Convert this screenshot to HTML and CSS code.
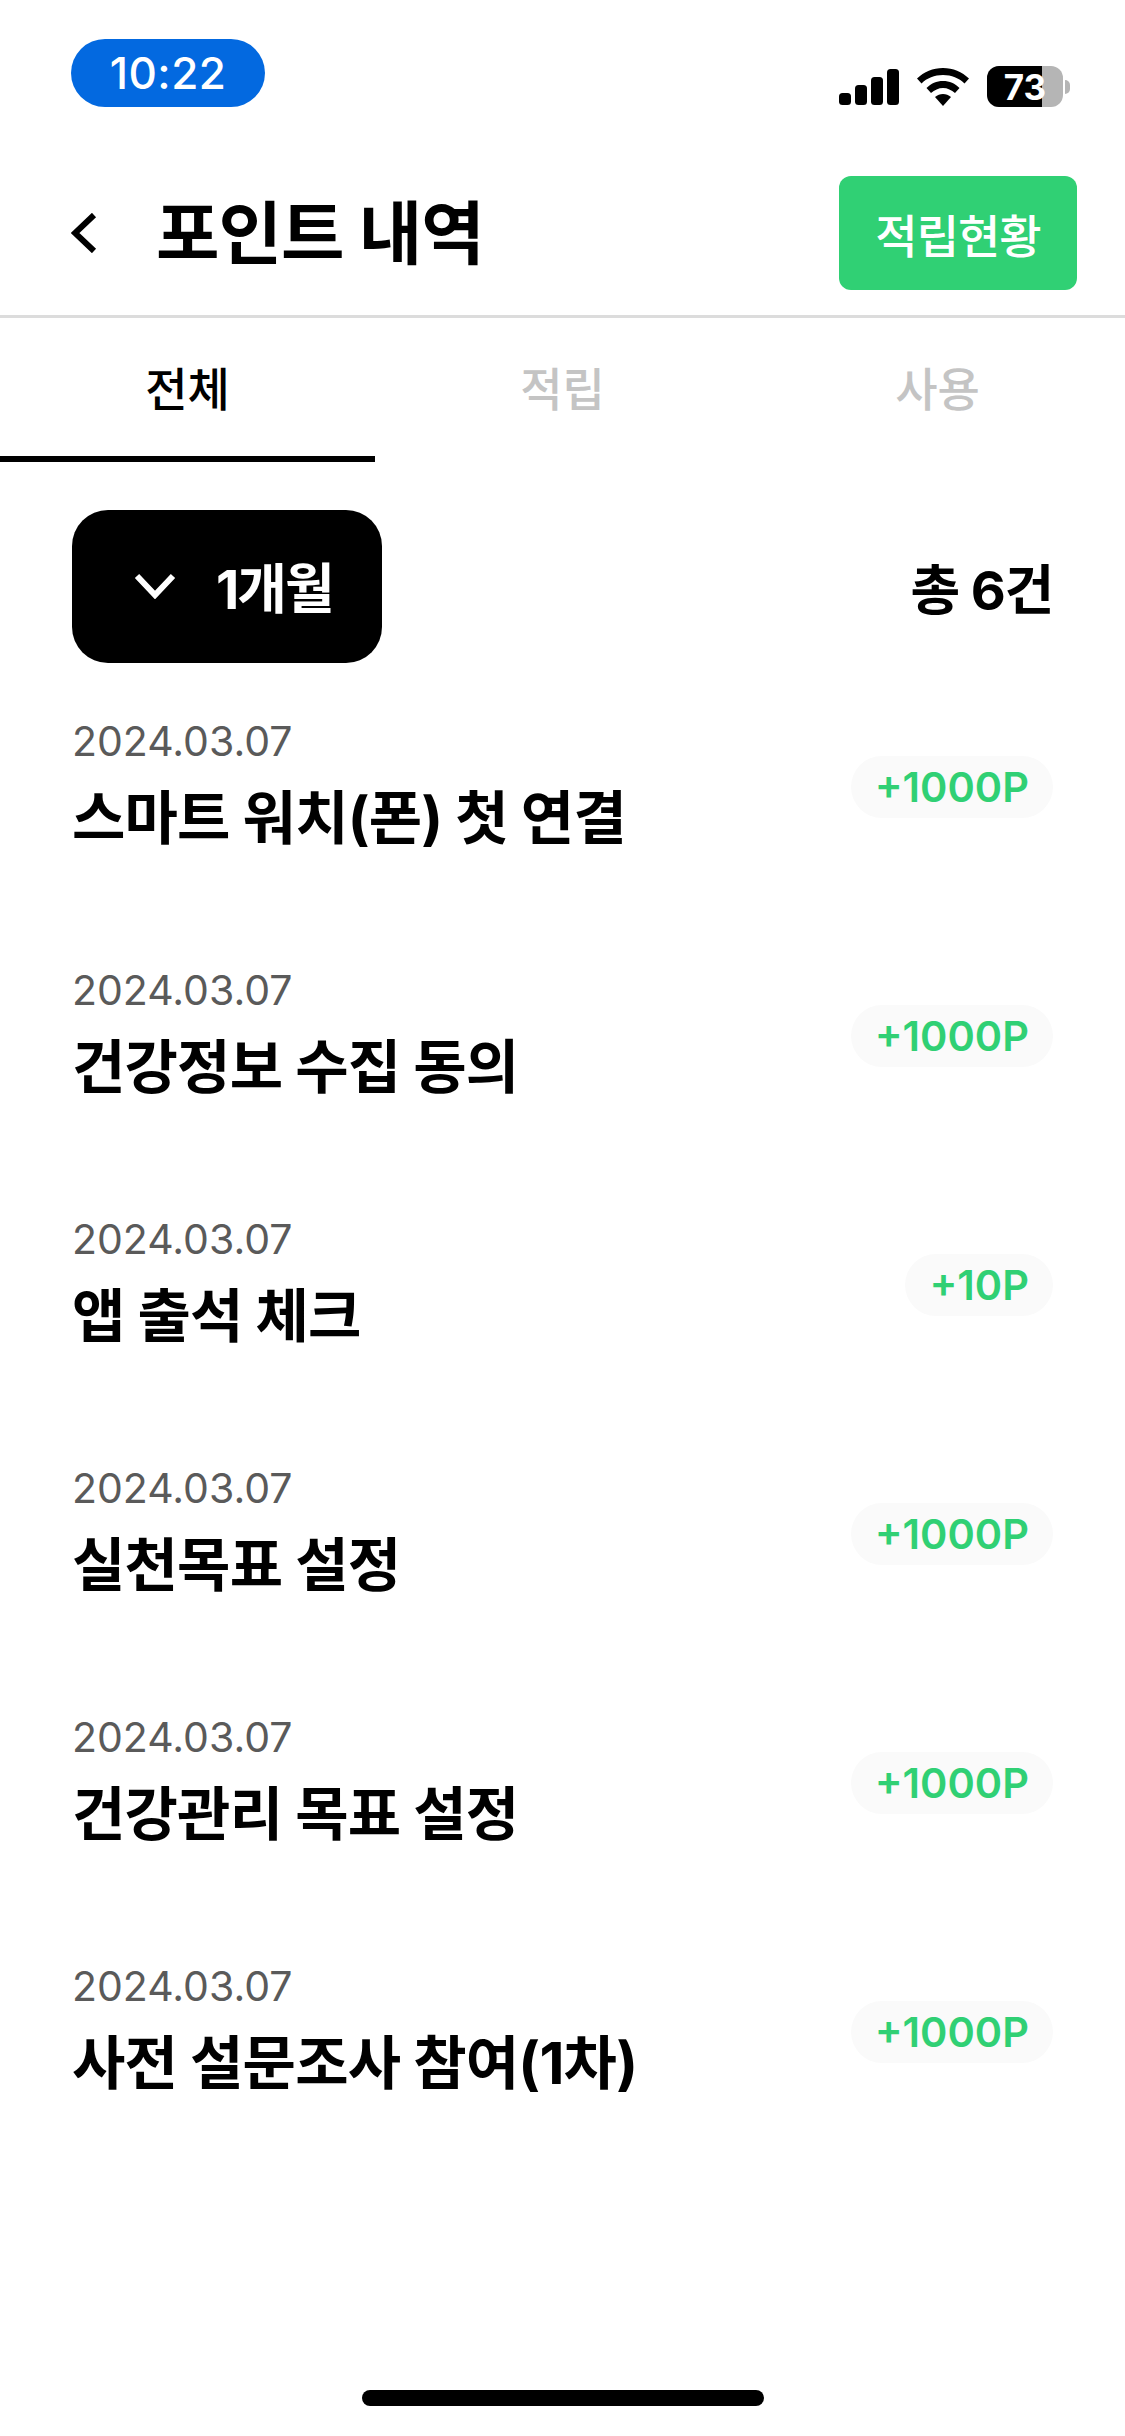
FILE: index.html
```html
<!DOCTYPE html>
<html lang="ko">
<head>
<meta charset="utf-8">
<title>포인트 내역</title>
<link rel="stylesheet" href="styles.css">
</head>
<body>
<div class="app">
  <div class="status">
    <div class="time">10:22</div>
    <div class="status-icons">
      <svg class="signal" width="60" height="36" viewBox="0 0 60 36"><rect x="0" y="24" width="12" height="12" rx="3.5"/><rect x="16" y="16" width="12" height="20" rx="3.5"/><rect x="32" y="8" width="12" height="28" rx="3.5"/><rect x="48" y="0" width="12" height="36" rx="3.5"/></svg>
      <svg class="wifi" width="52" height="38" viewBox="0 0 52 38"><path d="M26 0C16 0 7 4 0 10.500L4.500 15.500C10 10 17.500 7 26 7S42 10 47.500 15.500L52 10.500C45 4 36 0 26 0Z"/><path d="M26 13C19.500 13 14 15.500 9.500 20L14 25C17.500 22 21.500 20 26 20S34.500 22 38 25L42.500 20C38 15.500 32.500 13 26 13Z"/><path d="M26 26C23 26 20.500 27 18 29L26 38L34 29C31.500 27 29 26 26 26Z"/></svg>
      <div class="battery"><div class="battery-body"><span class="battery-fill"></span><span class="battery-text">73</span></div><span class="battery-tip"></span></div>
    </div>
  </div>

  <header class="topbar">
    <div class="topbar-left">
      <svg class="back" width="26" height="40" viewBox="0 0 26 40"><path d="M23 2L4 20L23 38" fill="none" stroke="#000" stroke-width="6"/></svg>
      <h1 class="title">포인트 내역</h1>
    </div>
    <button class="earn-btn">적립현황</button>
  </header>

  <nav class="tabs">
    <div class="tab tab-active">전체</div>
    <div class="tab">적립</div>
    <div class="tab">사용</div>
  </nav>

  <div class="filter">
    <div class="month">
      <svg width="42" height="26" viewBox="0 0 42 26"><path d="M3 3L21 22L39 3" fill="none" stroke="#fff" stroke-width="6"/></svg>
      <span>1개월</span>
    </div>
    <div class="count">총 6건</div>
  </div>

  <ul class="list">
    <li class="row"><div class="info"><div class="date">2024.03.07</div><div class="name">스마트 워치(폰) 첫 연결</div></div><div class="badge">+1000P</div></li>
    <li class="row"><div class="info"><div class="date">2024.03.07</div><div class="name">건강정보 수집 동의</div></div><div class="badge">+1000P</div></li>
    <li class="row"><div class="info"><div class="date">2024.03.07</div><div class="name">앱 출석 체크</div></div><div class="badge">+10P</div></li>
    <li class="row"><div class="info"><div class="date">2024.03.07</div><div class="name">실천목표 설정</div></div><div class="badge">+1000P</div></li>
    <li class="row"><div class="info"><div class="date">2024.03.07</div><div class="name">건강관리 목표 설정</div></div><div class="badge">+1000P</div></li>
    <li class="row"><div class="info"><div class="date">2024.03.07</div><div class="name">사전 설문조사 참여(1차)</div></div><div class="badge">+1000P</div></li>
  </ul>

  <div class="home-wrap"><div class="home"></div></div>
</div>
</body>
</html>
```

FILE: styles.css
```css
* { box-sizing: border-box; margin: 0; padding: 0; }
html, body { background: #fff; }
body { font-family: Inter, "Noto Sans CJK KR", sans-serif; color: #000; }
.app { width: 1125px; height: 2436px; display: flex; flex-direction: column; overflow: hidden; }

.status { height: 125px; padding: 39px 55px 0 71px; display: flex; justify-content: space-between; align-items: flex-start; }
.time { width: 194px; height: 68px; border-radius: 34px; background: #0369e0; color: #fff; font-size: 44px; font-weight: 500; display: flex; align-items: center; justify-content: center; letter-spacing: 0.5px; }
.status-icons { display: flex; align-items: center; gap: 18px; margin-top: 27px; }
.signal, .wifi { display: block; fill: #000; }
.battery { display: flex; align-items: center; gap: 2px; }
.battery-body { position: relative; width: 76px; height: 41px; border-radius: 12px; background: #b5b5b5; overflow: hidden; }
.battery-fill { position: absolute; left: 0; top: 0; bottom: 0; width: 55px; background: #000; }
.battery-text { position: absolute; inset: 0; display: flex; align-items: center; justify-content: center; color: #fff; font-size: 35px; font-weight: 700; }
.battery-tip { width: 5px; height: 14px; background: #b5b5b5; border-radius: 0 6px 6px 0; }

.topbar { height: 193px; padding: 51px 48px 25px 71px; display: flex; align-items: center; justify-content: space-between; border-bottom: 3px solid #dcdcdc; }
.topbar-left { display: flex; align-items: center; gap: 59px; }
.back { display: block; }
.title { font-size: 69px; font-weight: 700; letter-spacing: -1px; line-height: 1; padding-top: 3px; }
.earn-btn { width: 238px; height: 114px; border: 0; border-radius: 12px; background: #30d074; color: #fff; font-family: inherit; font-size: 46px; font-weight: 500; letter-spacing: -1px; }

.tabs { display: flex; height: 144px; }
.tab { width: 375px; display: flex; align-items: center; justify-content: center; padding-bottom: 2px; font-size: 46px; font-weight: 500; color: #c4c4c4; border-bottom: 6px solid transparent; }
.tab-active { color: #000; border-bottom-color: #000; }

.filter { display: flex; align-items: center; justify-content: space-between; padding: 48px 72px 0 72px; }
.month { width: 310px; height: 153px; border-radius: 36px; background: #000; color: #fff; display: flex; align-items: center; gap: 40px; padding: 0 0 2px 62px; font-size: 54px; font-weight: 700; letter-spacing: -2px; }
.count { font-size: 54px; font-weight: 700; letter-spacing: -1.2px; }

.list { list-style: none; padding: 0 72px; margin-top: 49px; }
.row { height: 249px; display: flex; justify-content: space-between; align-items: flex-start; }
.date { font-size: 41px; line-height: 50px; color: #5a5a5a; padding-top: 4px; }
.name { font-size: 58px; font-weight: 700; line-height: 74px; margin-top: 15px; letter-spacing: -0.8px; }
.badge { margin-top: 44px; height: 62px; border-radius: 31px; padding: 0 24px; background: #fafafa; color: #30d074; font-size: 41.5px; font-weight: 600; display: flex; align-items: center; }

.home-wrap { margin-top: auto; padding-bottom: 30px; display: flex; justify-content: center; }
.home { width: 402px; height: 16px; border-radius: 8px; background: #000; }
```
